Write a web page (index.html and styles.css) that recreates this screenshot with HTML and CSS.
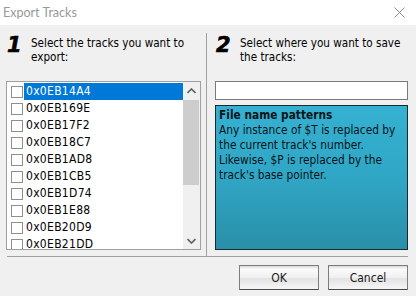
FILE: index.html
```html
<!DOCTYPE html>
<html lang="en">
<head>
    <meta charset="UTF-8">
    <title>Export Tracks</title>
    <link rel="stylesheet" href="styles.css">
</head>
<body>
    <div class="window">
        <div class="titlebar">
            <span class="title">Export Tracks</span>
            <svg class="close" width="11" height="11" viewBox="0 0 11 11">
                <path d="M0.5 0.5 L10.5 10.5 M10.5 0.5 L0.5 10.5" stroke="#8c8c8c" stroke-width="1" fill="none"/>
            </svg>
        </div>

        <div class="main">
            <div class="column left">
                <div class="step">
                    <span class="step-num">1</span>
                    <span class="step-text">Select the tracks you want to export:</span>
                </div>
                <div class="listbox">
                    <ul class="tracks">
                        <li class="selected"><span class="check"></span><span class="label">0x0EB14A4</span></li>
                        <li><span class="check"></span><span class="label">0x0EB169E</span></li>
                        <li><span class="check"></span><span class="label">0x0EB17F2</span></li>
                        <li><span class="check"></span><span class="label">0x0EB18C7</span></li>
                        <li><span class="check"></span><span class="label">0x0EB1AD8</span></li>
                        <li><span class="check"></span><span class="label">0x0EB1CB5</span></li>
                        <li><span class="check"></span><span class="label">0x0EB1D74</span></li>
                        <li><span class="check"></span><span class="label">0x0EB1E88</span></li>
                        <li><span class="check"></span><span class="label">0x0EB20D9</span></li>
                        <li><span class="check"></span><span class="label">0x0EB21DD</span></li>
                    </ul>
                    <div class="scrollbar">
                        <div class="arrow">
                            <svg width="9" height="6" viewBox="0 0 9 6"><polyline points="0.5,5 4.5,1 8.5,5" stroke="#606060" stroke-width="1.6" fill="none"/></svg>
                        </div>
                        <div class="track"><div class="thumb"></div></div>
                        <div class="arrow">
                            <svg width="9" height="6" viewBox="0 0 9 6"><polyline points="0.5,1 4.5,5 8.5,1" stroke="#606060" stroke-width="1.6" fill="none"/></svg>
                        </div>
                    </div>
                </div>
            </div>

            <div class="divider"></div>

            <div class="column right">
                <div class="step">
                    <span class="step-num">2</span>
                    <span class="step-text">Select where you want to save the tracks:</span>
                </div>
                <input type="text" class="path">
                <div class="hint">
                    <div class="hint-title">File name patterns</div>
                    <p>Any instance of $T is replaced by the current track's number. Likewise, $P is replaced by the track's base pointer.</p>
                </div>
            </div>
        </div>

        <div class="rule"></div>

        <div class="buttons">
            <button>OK</button>
            <button>Cancel</button>
        </div>
    </div>
</body>
</html>
```

FILE: styles.css
```css
* {
    margin: 0;
    padding: 0;
    box-sizing: border-box;
}

body {
    width: 416px;
    height: 296px;
    overflow: hidden;
    font-family: "DejaVu Sans Condensed", "DejaVu Sans", sans-serif;
    color: #000;
}

.window {
    width: 416px;
    height: 296px;
    background: #f0f0f0;
}

.titlebar {
    height: 25px;
    background: white;
    display: flex;
    align-items: center;
    justify-content: space-between;
    padding: 0 11px 1px 3px;
}

.title {
    font-family: Lato, sans-serif;
    font-size: 12.5px;
    color: #999;
}

.main {
    height: 231px;
    display: flex;
    padding: 8px 8px 0 6px;
}

.column {
    display: flex;
    flex-direction: column;
}

.left {
    width: 195px;
}

.right {
    width: 193px;
}

.divider {
    width: 1px;
    background: #a0a0a0;
    margin: 0 8px 0 5px;
}

.step {
    display: flex;
    height: 48px;
    padding-top: 2px;
}

.step-num {
    width: 25px;
    padding-left: 1px;
    font-family: "DejaVu Sans", sans-serif;
    font-style: italic;
    font-weight: bold;
    font-size: 21px;
    line-height: 20px;
    -webkit-text-stroke: 0.6px #000;
}

.step-text {
    flex: 1;
    font-size: 11.6px;
    line-height: 14px;
    padding-top: 1px;
}

.listbox {
    height: 169px;
    border: 1px solid #a0a0a0;
    background: white;
    display: flex;
    overflow: hidden;
}

.tracks {
    flex: 1;
    list-style: none;
    padding-top: 1px;
}

.tracks li {
    height: 17px;
    display: flex;
    align-items: center;
    padding-left: 4px;
    font-size: 12px;
}

.check {
    width: 12px;
    height: 12px;
    border: 1px solid #8e8e8e;
    background: white;
    margin-right: 1px;
}

.label {
    flex: 1;
    height: 17px;
    line-height: 17px;
    padding-left: 2px;
    letter-spacing: 0.3px;
}

.selected .label {
    background: #0078d7;
    color: white;
}

.scrollbar {
    width: 17px;
    background: #f0f0f0;
    display: flex;
    flex-direction: column;
}

.arrow {
    height: 17px;
    display: flex;
    align-items: center;
    justify-content: center;
}

.track {
    flex: 1;
}

.thumb {
    height: 85px;
    margin: 1px 1px 0 0;
    background: #cdcdcd;
}

.path {
    height: 19px;
    border: 1px solid #7a7a7a;
    background: white;
}

.hint {
    height: 145px;
    margin-top: 5px;
    border: 1px solid #1b2a31;
    background: linear-gradient(#36b1d2, #30a6c5 50%, #2a8fa8);
    padding: 2px 3px;
    font-size: 11.8px;
    line-height: 15px;
    color: #0a1418;
}

.hint-title {
    font-weight: bold;
}

.rule {
    height: 1px;
    background: #a0a0a0;
    margin: 0 8px 0 7px;
}

.buttons {
    display: flex;
    justify-content: flex-end;
    gap: 9px;
    padding: 8px 8px 0 0;
}

button {
    width: 80px;
    height: 25px;
    border: 1px solid #7c7c7c;
    border-bottom-color: #4a4a4a;
    border-radius: 1px;
    background: linear-gradient(#d6d6d6 0, #fbfbfb 3px, #f0f0f0 50%, #e3e3e3 55%, #f6f6f6 100%);
    font-family: "DejaVu Sans Condensed", "DejaVu Sans", sans-serif;
    font-size: 12px;
    color: #1a1a1a;
}
```
